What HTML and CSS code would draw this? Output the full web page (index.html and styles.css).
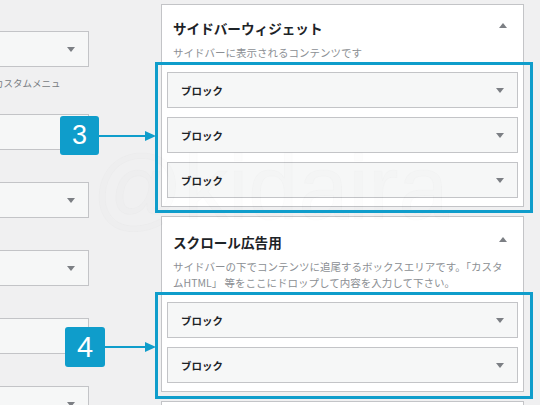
FILE: index.html
```html
<!DOCTYPE html>
<html lang="ja">
<head>
<meta charset="utf-8">
<title>Widgets</title>
<link rel="stylesheet" href="styles.css">
</head>
<body>
<div class="page">
  <div class="left">
    <div class="left-inner">
      <div class="sel"><span class="tri-down"></span></div>
      <p class="left-desc">カスタムメニュ</p>
      <div class="sel sel-after-desc"><span class="tri-down"></span></div>
      <div class="sel"><span class="tri-down"></span></div>
      <div class="sel"><span class="tri-down"></span></div>
      <div class="sel"><span class="tri-down"></span></div>
      <div class="sel"><span class="tri-down"></span></div>
    </div>
  </div>

  <div class="right">
    <section class="widget">
      <div class="widget-head">
        <h2 class="widget-title">サイドバーウィジェット</h2>
        <span class="tri-up"></span>
      </div>
      <p class="widget-desc">サイドバーに表示されるコンテンツです</p>
      <div class="blocks">
        <div class="block"><span class="block-name">ブロック</span><span class="tri-down"></span></div>
        <div class="block"><span class="block-name">ブロック</span><span class="tri-down"></span></div>
        <div class="block"><span class="block-name">ブロック</span><span class="tri-down"></span></div>
      </div>
    </section>

    <section class="widget widget-scroll">
      <div class="widget-head">
        <h2 class="widget-title">スクロール広告用</h2>
        <span class="tri-up"></span>
      </div>
      <p class="widget-desc">サイドバーの下でコンテンツに追尾するボックスエリアです。「カスタ<br>ムHTML」 等をここにドロップして内容を入力して下さい。</p>
      <div class="blocks">
        <div class="block"><span class="block-name">ブロック</span><span class="tri-down"></span></div>
        <div class="block"><span class="block-name">ブロック</span><span class="tri-down"></span></div>
      </div>
    </section>

    <section class="widget widget-next"></section>
  </div>

  <div class="watermark">@kidaira</div>

  <div class="highlight highlight-3"></div>
  <div class="highlight highlight-4"></div>

  <div class="callout callout-3">
    <span class="badge">3</span>
    <span class="arrow-line"></span>
    <span class="arrow-head"></span>
  </div>
  <div class="callout callout-4">
    <span class="badge badge-4">4</span>
    <span class="arrow-line"></span>
    <span class="arrow-head"></span>
  </div>
</div>
</body>
</html>
```

FILE: styles.css
```css
html, body {
  margin: 0;
  padding: 0;
}
body {
  background: #f0f0f1;
  font-family: "Noto Sans CJK JP", "Noto Sans", sans-serif;
  color: #1d2327;
}
.page {
  position: relative;
  width: 540px;
  height: 405px;
  overflow: hidden;
  display: flex;
  align-items: flex-start;
}

/* left column */
.left {
  width: 90px;
  flex: none;
  overflow: hidden;
  padding-top: 31px;
}
.left-inner {
  margin-left: -111px;
  width: 200px;
  display: flex;
  flex-direction: column;
}
.sel {
  box-sizing: border-box;
  height: 36px;
  background: #f6f7f7;
  border: 1px solid #c3c4c7;
  display: flex;
  align-items: center;
  justify-content: flex-end;
  padding-right: 13px;
  margin-top: 32px;
}
.sel:first-child { margin-top: 0; }
.sel.sel-after-desc { margin-top: 24px; }
.left-desc {
  margin: 9px 0 0 0;
  padding-left: 105px;
  font-size: 9.5px;
  line-height: 14px;
  color: #787c82;
  white-space: nowrap;
}

.tri-down {
  width: 0;
  height: 0;
  border-left: 4px solid transparent;
  border-right: 4px solid transparent;
  border-top: 5px solid #7c7f84;
}
.tri-up {
  width: 0;
  height: 0;
  border-left: 4px solid transparent;
  border-right: 4px solid transparent;
  border-bottom: 5px solid #7c7f84;
  margin: 5px 5px 0 0;
  flex: none;
}

/* right column */
.right {
  margin-left: 71px;
  width: 363px;
  flex: none;
  padding-top: 4px;
  display: flex;
  flex-direction: column;
  gap: 9px;
}
.widget {
  box-sizing: border-box;
  background: #fff;
  border: 1px solid #c3c4c7;
  padding: 13px 11px 8px 11px;
}
.widget-scroll {
  padding-top: 15px;
}
.widget-next {
  height: 40px;
}
.widget-head {
  display: flex;
  justify-content: space-between;
  align-items: flex-start;
}
.widget-title {
  margin: 0;
  font-size: 13.6px;
  line-height: 20px;
  font-weight: 700;
  color: #1d2327;
}
.widget-desc {
  margin: 7px 0 0 0;
  font-size: 10.5px;
  line-height: 16px;
  color: #8c8f94;
  white-space: nowrap;
}
.blocks {
  margin: 11px -6px 0 -6px;
  display: flex;
  flex-direction: column;
  gap: 9px;
}
.block {
  box-sizing: border-box;
  height: 36px;
  background: #f6f7f7;
  border: 1px solid #c3c4c7;
  display: flex;
  align-items: center;
  justify-content: space-between;
  padding: 0 13px 0 13px;
}
.block-name {
  font-size: 10.5px;
  font-weight: 700;
  color: #1d2327;
}

/* watermark */
.watermark {
  position: absolute;
  left: 92px;
  top: 128px;
  font-family: "Liberation Sans", Arial, sans-serif;
  font-size: 90px;
  line-height: 120px;
  color: rgba(0, 0, 0, 0.008);
  -webkit-text-stroke: 1px rgba(0, 0, 0, 0.014);
  pointer-events: none;
  white-space: nowrap;
}

/* annotations */
.highlight {
  position: absolute;
  box-sizing: border-box;
  border: 3px solid #0f9dcb;
  left: 155px;
  width: 378px;
}
.highlight-3 { top: 62px; height: 151px; }
.highlight-4 { top: 292px; height: 107px; }

.callout {
  position: absolute;
  display: flex;
  align-items: center;
}
.callout-3 { left: 60px; top: 116px; }
.callout-4 { left: 65px; top: 327px; }
.badge {
  box-sizing: border-box;
  width: 39px;
  height: 39px;
  border-radius: 3px;
  background: #0f9dcb;
  color: #fff;
  font-family: "Liberation Sans", Arial, sans-serif;
  font-size: 27px;
  line-height: 39px;
  text-align: center;
}
.badge-4 {
  width: 40px;
  height: 40px;
  line-height: 40px;
  font-size: 29px;
}
.arrow-line {
  display: block;
  width: 46px;
  height: 2px;
  background: #0f9dcb;
}
.callout-4 .arrow-line { width: 40px; }
.arrow-head {
  display: block;
  width: 0;
  height: 0;
  border-top: 5px solid transparent;
  border-bottom: 5px solid transparent;
  border-left: 11px solid #0f9dcb;
}
```
